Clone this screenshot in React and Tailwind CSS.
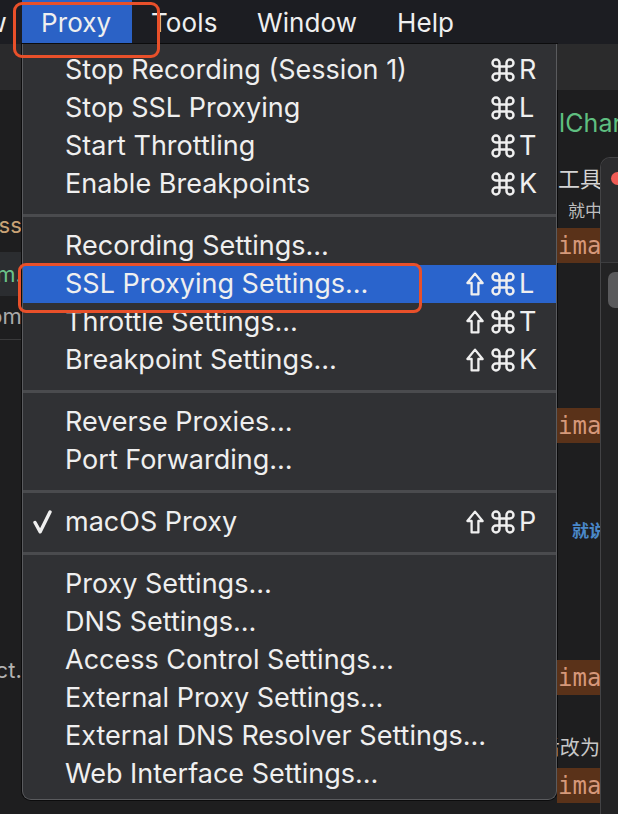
import { Command } from 'lucide-react'

const SECTIONS = [
  [
    { label: 'Stop Recording (Session 1)', key: 'R' },
    { label: 'Stop SSL Proxying', key: 'L' },
    { label: 'Start Throttling', key: 'T' },
    { label: 'Enable Breakpoints', key: 'K' },
  ],
  [
    { label: 'Recording Settings…' },
    { label: 'SSL Proxying Settings…', key: 'L', shift: true, active: true },
    { label: 'Throttle Settings…', key: 'T', shift: true },
    { label: 'Breakpoint Settings…', key: 'K', shift: true },
  ],
  [{ label: 'Reverse Proxies…' }, { label: 'Port Forwarding…' }],
  [{ label: 'macOS Proxy', key: 'P', shift: true, checked: true }],
  [
    { label: 'Proxy Settings…' },
    { label: 'DNS Settings…' },
    { label: 'Access Control Settings…' },
    { label: 'External Proxy Settings…' },
    { label: 'External DNS Resolver Settings…' },
    { label: 'Web Interface Settings…' },
  ],
]

function ShiftGlyph() {
  return (
    <svg width="18" height="24" viewBox="0 0 18 24" fill="none" stroke="currentColor" strokeWidth="2.3" strokeLinejoin="round">
      <path d="M9 1.6 L16.6 11 H12.4 V22.4 H5.6 V11 H1.4 Z" />
    </svg>
  )
}

function CheckGlyph() {
  return (
    <svg width="19" height="24" viewBox="0 0 19 24" fill="none" stroke="currentColor" strokeWidth="3.4" strokeLinecap="round" strokeLinejoin="round">
      <path d="M2 12.5 L7.2 21.8 L17 2" />
    </svg>
  )
}

function Shortcut({ shift, k }) {
  return (
    <div className="flex items-center">
      {shift && <span className="mr-[8px] flex"><ShiftGlyph /></span>}
      <span className="w-[21px] h-[21px] flex items-center justify-center">
        <Command size={28} strokeWidth={2.1} className="shrink-0" />
      </span>
      <span className="w-[24px] ml-[6px] mr-[13px]">{k}</span>
    </div>
  )
}

function MenuRow({ item }) {
  return (
    <div className={`flex items-center h-[38px] ${item.active ? 'bg-[#2a64cc]' : ''}`}>
      <div className="w-[42px] pl-[10px] flex items-center">{item.checked && <CheckGlyph />}</div>
      <span className="flex-1 whitespace-nowrap">{item.label}</span>
      {item.key && <Shortcut shift={item.shift} k={item.key} />}
    </div>
  )
}

function Separator() {
  return (
    <div className="h-[24px] flex items-center">
      <div className="h-[3px] w-full bg-[#4a4b4e]" />
    </div>
  )
}

function Clip({ className, text }) {
  return (
    <div className={`overflow-hidden flex justify-end whitespace-nowrap ${className}`}>
      <span>{text}</span>
    </div>
  )
}

function ImaTag({ className }) {
  return (
    <div className={`flex items-center h-[35px] font-['DejaVu_Sans_Mono',monospace] text-[24px] text-[#d6987a] ${className}`}>
      <span className="w-[5px] overflow-hidden flex justify-end">'</span>
      <span className="bg-[#5a3219] h-[35px] pl-[1px] flex items-center">ima</span>
    </div>
  )
}

export default function App() {
  return (
    <div className="relative w-[618px] h-[814px] overflow-hidden bg-[#1e1e1f] font-[Inter,'Noto_Sans_CJK_SC',sans-serif] text-[26px] text-[#efefef] tracking-[0.1px]">
      {/* menu bar */}
      <div className="h-[44px] bg-[#1c1d22] flex items-center">
        <Clip className="w-[22px] pr-[15px] shrink-0" text="View" />
        <div className="h-[44px] w-[110px] shrink-0 bg-[#2b62c6] flex items-center pl-[19px]">Proxy</div>
        <div className="w-[105px] shrink-0 pl-[19px]">Tools</div>
        <div className="w-[140px] shrink-0 pl-[20px]">Window</div>
        <div className="pl-[20px]">Help</div>
      </div>

      <div className="flex h-[770px]">
        {/* left background */}
        <div className="w-[22px] shrink-0 flex flex-col text-[22px]">
          <div className="h-[46px] bg-[#2a2a2c]" />
          <Clip className="mt-[120px] h-[30px] items-center text-[#c9a275]" text="Process" />
          <Clip className="mt-[12px] h-[44px] items-center bg-[#2b2d30] text-[#6cc28a]" text="com." />
          <Clip className="h-[40px] items-center text-[#a9a9a9]" text="bottom" />
          <div className="mt-[3px] h-px bg-[#3a3a3b]" />
          <Clip className="mt-[315px] h-[30px] items-center text-[#b3b3b3]" text="select." />
        </div>

        {/* dropdown menu */}
        <div className="w-[535px] shrink-0 self-start bg-[#303134] text-[27px] tracking-normal border-x border-b border-[#5a5b5e] rounded-b-[9px] pt-[7px] pb-[6px] shadow-[0_0_0_1px_#0c0c0d]">
          {SECTIONS.map((items, i) => (
            <div key={i}>
              {i > 0 && <Separator />}
              {items.map((item) => (
                <MenuRow key={item.label} item={item} />
              ))}
            </div>
          ))}
        </div>

        {/* right background */}
        <div className="flex-1 min-w-0 overflow-hidden flex flex-col">
          <div className="h-[46px] bg-[#2b2b2c]" />
          <div className="h-[67px] pl-[2px] flex items-center whitespace-nowrap text-[#5fbf80] text-[25px]">
            lCharles
          </div>
          <div className="flex flex-1">
            <div className="w-[43px] shrink-0 flex flex-col text-[22px] text-[#d4d4d4]">
              <div className="mt-[8px] h-[28px] pl-[1px] whitespace-nowrap flex items-center">工具(</div>
              <div className="mt-[6px] h-[26px] pl-[11px] whitespace-nowrap flex items-center text-[17px] text-[#bdbdbd]">就中</div>
              <ImaTag className="mt-[3px]" />
              <ImaTag className="mt-[145px]" />
              <div className="mt-[80px] h-[18px] pl-[15px] whitespace-nowrap flex items-center text-[17px] font-bold text-[#4a88c8]">就说</div>
              <ImaTag className="mt-[119px]" />
              <div className="mt-[42px] h-[22px] whitespace-nowrap flex items-center justify-end text-[20px] text-[#c8c8c8] overflow-hidden">
                <span>后改为</span>
              </div>
              <ImaTag className="mt-[9px]" />
            </div>
            <div className="relative flex-1 flex flex-col bg-[#232324] border-l border-t border-[#434345] rounded-tl-[10px] overflow-hidden">
              <div className="h-[105px] bg-[#2c2c2e] border-b border-[#3d3d3f] pt-[14px] pl-[10px]">
                <div className="w-[13px] h-[13px] rounded-full bg-[#ee5b55]" />
              </div>
              <div className="mt-[9px] ml-[7px] h-[36px] rounded-l-[7px] bg-[#5a5a5c]" />
            </div>
          </div>
        </div>
      </div>

      {/* annotation boxes */}
      <div className="absolute left-[13px] top-[2px] w-[147px] h-[56px] border-[3px] border-[#e8502a] rounded-[9px]" />
      <div className="absolute left-[18px] top-[263px] w-[404px] h-[50px] border-[3px] border-[#e8502a] rounded-[8px]" />
    </div>
  )
}
